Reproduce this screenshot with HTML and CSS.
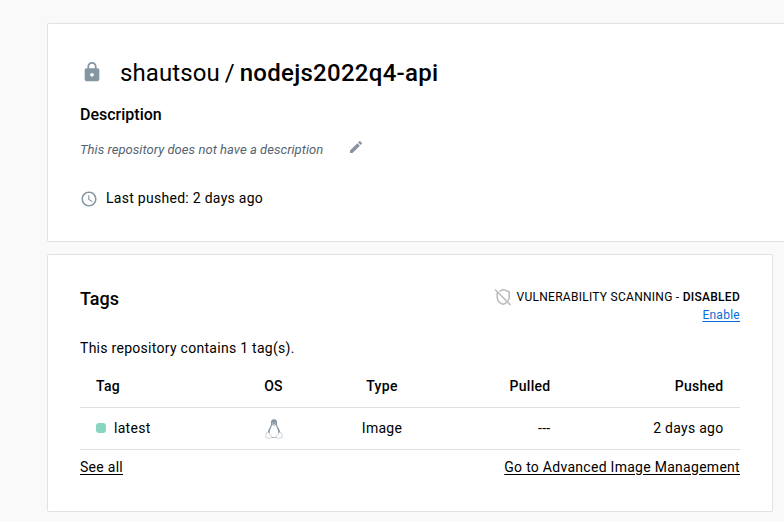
FILE: index.html
```html
<!DOCTYPE html>
<html lang="en">
<head>
<meta charset="utf-8">
<title>shautsou/nodejs2022q4-api</title>
<link rel="stylesheet" href="styles.css">
</head>
<body>
<main class="page">
  <section class="card repo">
    <h1 class="repo-title">
      <svg class="lock" viewBox="0 0 24 24"><path d="M18 8h-1V6c0-2.760-2.240-5-5-5S7 3.240 7 6v2H6c-1.100 0-2 .9-2 2v10c0 1.100.9 2 2 2h12c1.100 0 2-.9 2-2V10c0-1.100-.9-2-2-2zm-6 9c-1.100 0-2-.9-2-2s.9-2 2-2 2 .9 2 2-.9 2-2 2zm3.100-9H8.900V6c0-1.710 1.390-3.100 3.100-3.100s3.100 1.390 3.100 3.100v2z"/></svg>
      <span class="owner">shautsou</span><span class="slash">/</span><span class="name">nodejs2022q4-api</span>
    </h1>
    <h2 class="label">Description</h2>
    <div class="description">
      <em>This repository does not have a description</em>
      <svg class="pencil" viewBox="0 0 24 24"><path d="M3 17.250V21h3.750L17.810 9.940l-3.750-3.750L3 17.250zM20.710 7.040c.39-.39.39-1.020 0-1.410l-2.340-2.340c-.39-.39-1.020-.39-1.410 0l-1.830 1.830 3.750 3.750 1.830-1.830z"/></svg>
    </div>
    <div class="pushed">
      <svg class="clock" viewBox="0 0 24 24"><path d="M11.990 2C6.470 2 2 6.480 2 12s4.470 10 9.990 10C17.520 22 22 17.520 22 12S17.520 2 11.990 2zM12 20c-4.420 0-8-3.580-8-8s3.580-8 8-8 8 3.580 8 8-3.580 8-8 8zm.5-13H11v6l5.250 3.150.75-1.230-4.500-2.670V7z"/></svg>
      <span>Last pushed: 2 days ago</span>
    </div>
  </section>
  <section class="card tags">
    <header class="tags-head">
      <h2 class="tags-title">Tags</h2>
      <div class="scan">
        <div class="scan-status">
          <svg class="shield" viewBox="0 0 18 18"><path d="M5.500 3.200 9.500 1.500 15.200 3.700V9c0 1.500-.5 2.800-1.200 3.900M3.200 4.500V9c0 3.700 2.300 6.100 6 7.300 1.500-.5 2.700-1.200 3.600-2.100M1 1.500 16.500 17"/></svg>
          <span>VULNERABILITY SCANNING - <b>DISABLED</b></span>
        </div>
        <a class="enable" href="#">Enable</a>
      </div>
    </header>
    <p class="count">This repository contains 1 tag(s).</p>
    <table class="table">
      <colgroup><col class="c-tag"><col class="c-os"><col class="c-type"><col class="c-pulled"><col></colgroup>
      <thead><tr><th>Tag</th><th class="mid">OS</th><th class="mid">Type</th><th class="end">Pulled</th><th class="end">Pushed</th></tr></thead>
      <tbody><tr>
        <td><span class="tag"><i class="dot"></i>latest</span></td>
        <td class="mid"><svg class="tux" viewBox="0 0 18 20">
          <path class="tux-body" d="M9 .3C6.500.3 5.700 2 6 4.200 6.200 6 5.400 7.200 4.500 8.900 3.500 10.800 2.700 12.200 2.900 14l2 4.700h8.200l2-4.700c.2-1.800-.6-3.200-1.600-5.100-.9-1.700-1.700-2.900-1.500-4.700C12.300 2 11.500.3 9 .3z"/>
          <path class="tux-belly" d="M7 5.800 9 6.700l2-.9c.1 2.300 2.500 4.700 2.400 8.200-.1 2.500-1.800 4.200-4.400 4.200S4.700 16.500 4.600 14C4.500 10.500 6.900 8.100 7 5.800z"/>
          <path class="tux-foot" d="m3.300 13.300-2.100.9-.5 4.200 4.600 1 1.700-1.600zm11.400 0 2.100.9.500 4.200-4.600 1-1.700-1.600z"/>
          <path class="tux-face" d="M7.300 3.400h1v1h-1zm2.400 0h1v1h-1zM7.300 4.900h3.400L9 6z"/>
        </svg></td>
        <td class="mid">Image</td><td class="end">---</td><td class="end">2 days ago</td>
      </tr></tbody>
    </table>
    <footer class="links"><a href="#">See all</a><a href="#">Go to Advanced Image Management</a></footer>
  </section>
</main>
</body>
</html>
```
FILE: styles.css
```css
* { box-sizing: border-box; }
body {
  margin: 0;
  overflow: hidden;
  background: #f9f9f9;
  color: #000;
  font: 14px/20px Roboto, sans-serif;
  letter-spacing: .28px;
}
h1, h2, p { margin: 0; font-weight: 500; }
a { color: inherit; text-underline-offset: 2px; }
.page { padding: 23px 0 10px 47px; }
.card { background: #fff; border: 1px solid #e1e2e6; border-radius: 2px; }

.repo { width: 760px; height: 219px; padding: 32px; margin-bottom: 12px; }
.repo-title {
  display: flex;
  align-items: center;
  height: 34px;
  font-size: 24px;
  line-height: 34px;
  letter-spacing: .1px;
}
.lock { width: 22px; height: 22px; margin: 0 17px 2px 1px; fill: #8496a0; }
.owner, .slash { font-weight: 400; }
.slash { margin: 0 4.800px 0 5px; }
.name { letter-spacing: .28px; }
.label { margin-top: 14px; font-size: 16px; line-height: 22px; letter-spacing: 0; }
.description {
  display: flex;
  align-items: center;
  height: 20px;
  margin-top: 14px;
  color: #556370;
  font-size: 13px;
  letter-spacing: .05px;
}
.pencil { width: 16px; height: 16px; margin: 0 0 6px 25px; fill: #8993a5; }
.pushed { display: flex; align-items: center; margin-top: 28px; }
.clock { width: 18px; height: 18px; margin: 1px 8px 0 0; fill: #8496a0; }

.tags { width: 726px; height: 258px; padding: 32px; }
.tags-head { display: flex; justify-content: space-between; height: 51px; }
.tags-title { font-size: 18px; line-height: 24px; letter-spacing: 0; }
.scan { padding-top: 1px; font-size: 12px; line-height: 18px; letter-spacing: .27px; text-align: right; }
.scan-status { display: flex; align-items: center; height: 18px; }
.scan-status b { font-weight: 500; }
.shield { width: 18px; height: 18px; margin-right: 5px; fill: none; stroke: #bdbdbd; stroke-width: 1.6; }
.enable { color: #086dd7; }
.count { font-weight: 400; }

.table { width: 660px; margin-top: 7px; border-collapse: collapse; table-layout: fixed; }
.c-tag { width: 147px; }
.c-os { width: 93px; }
.c-type { width: 124px; }
.c-pulled { width: 123px; }
.table th, .table td { height: 42px; padding: 0 16px; text-align: left; border-bottom: 1px solid #e0e0e0; }
.table th { font-weight: 500; }
.table .mid { text-align: center; }
.table .end { padding-right: 16.500px; text-align: right; }
.tag { display: flex; align-items: center; }
.dot { width: 10px; height: 10px; margin-right: 8px; border-radius: 3px; background: #88d5c0; }
.tux { display: block; width: 18px; height: 20px; margin: 1px auto 0; }
.tux-body { fill: #8596a3; }
.tux-belly { fill: #fff; }
.tux-foot { fill: #fff; stroke: #c3cbd1; stroke-width: .8; }
.tux-face { fill: #dfe4e8; }
.links { display: flex; justify-content: space-between; margin-top: 7px; }
```
